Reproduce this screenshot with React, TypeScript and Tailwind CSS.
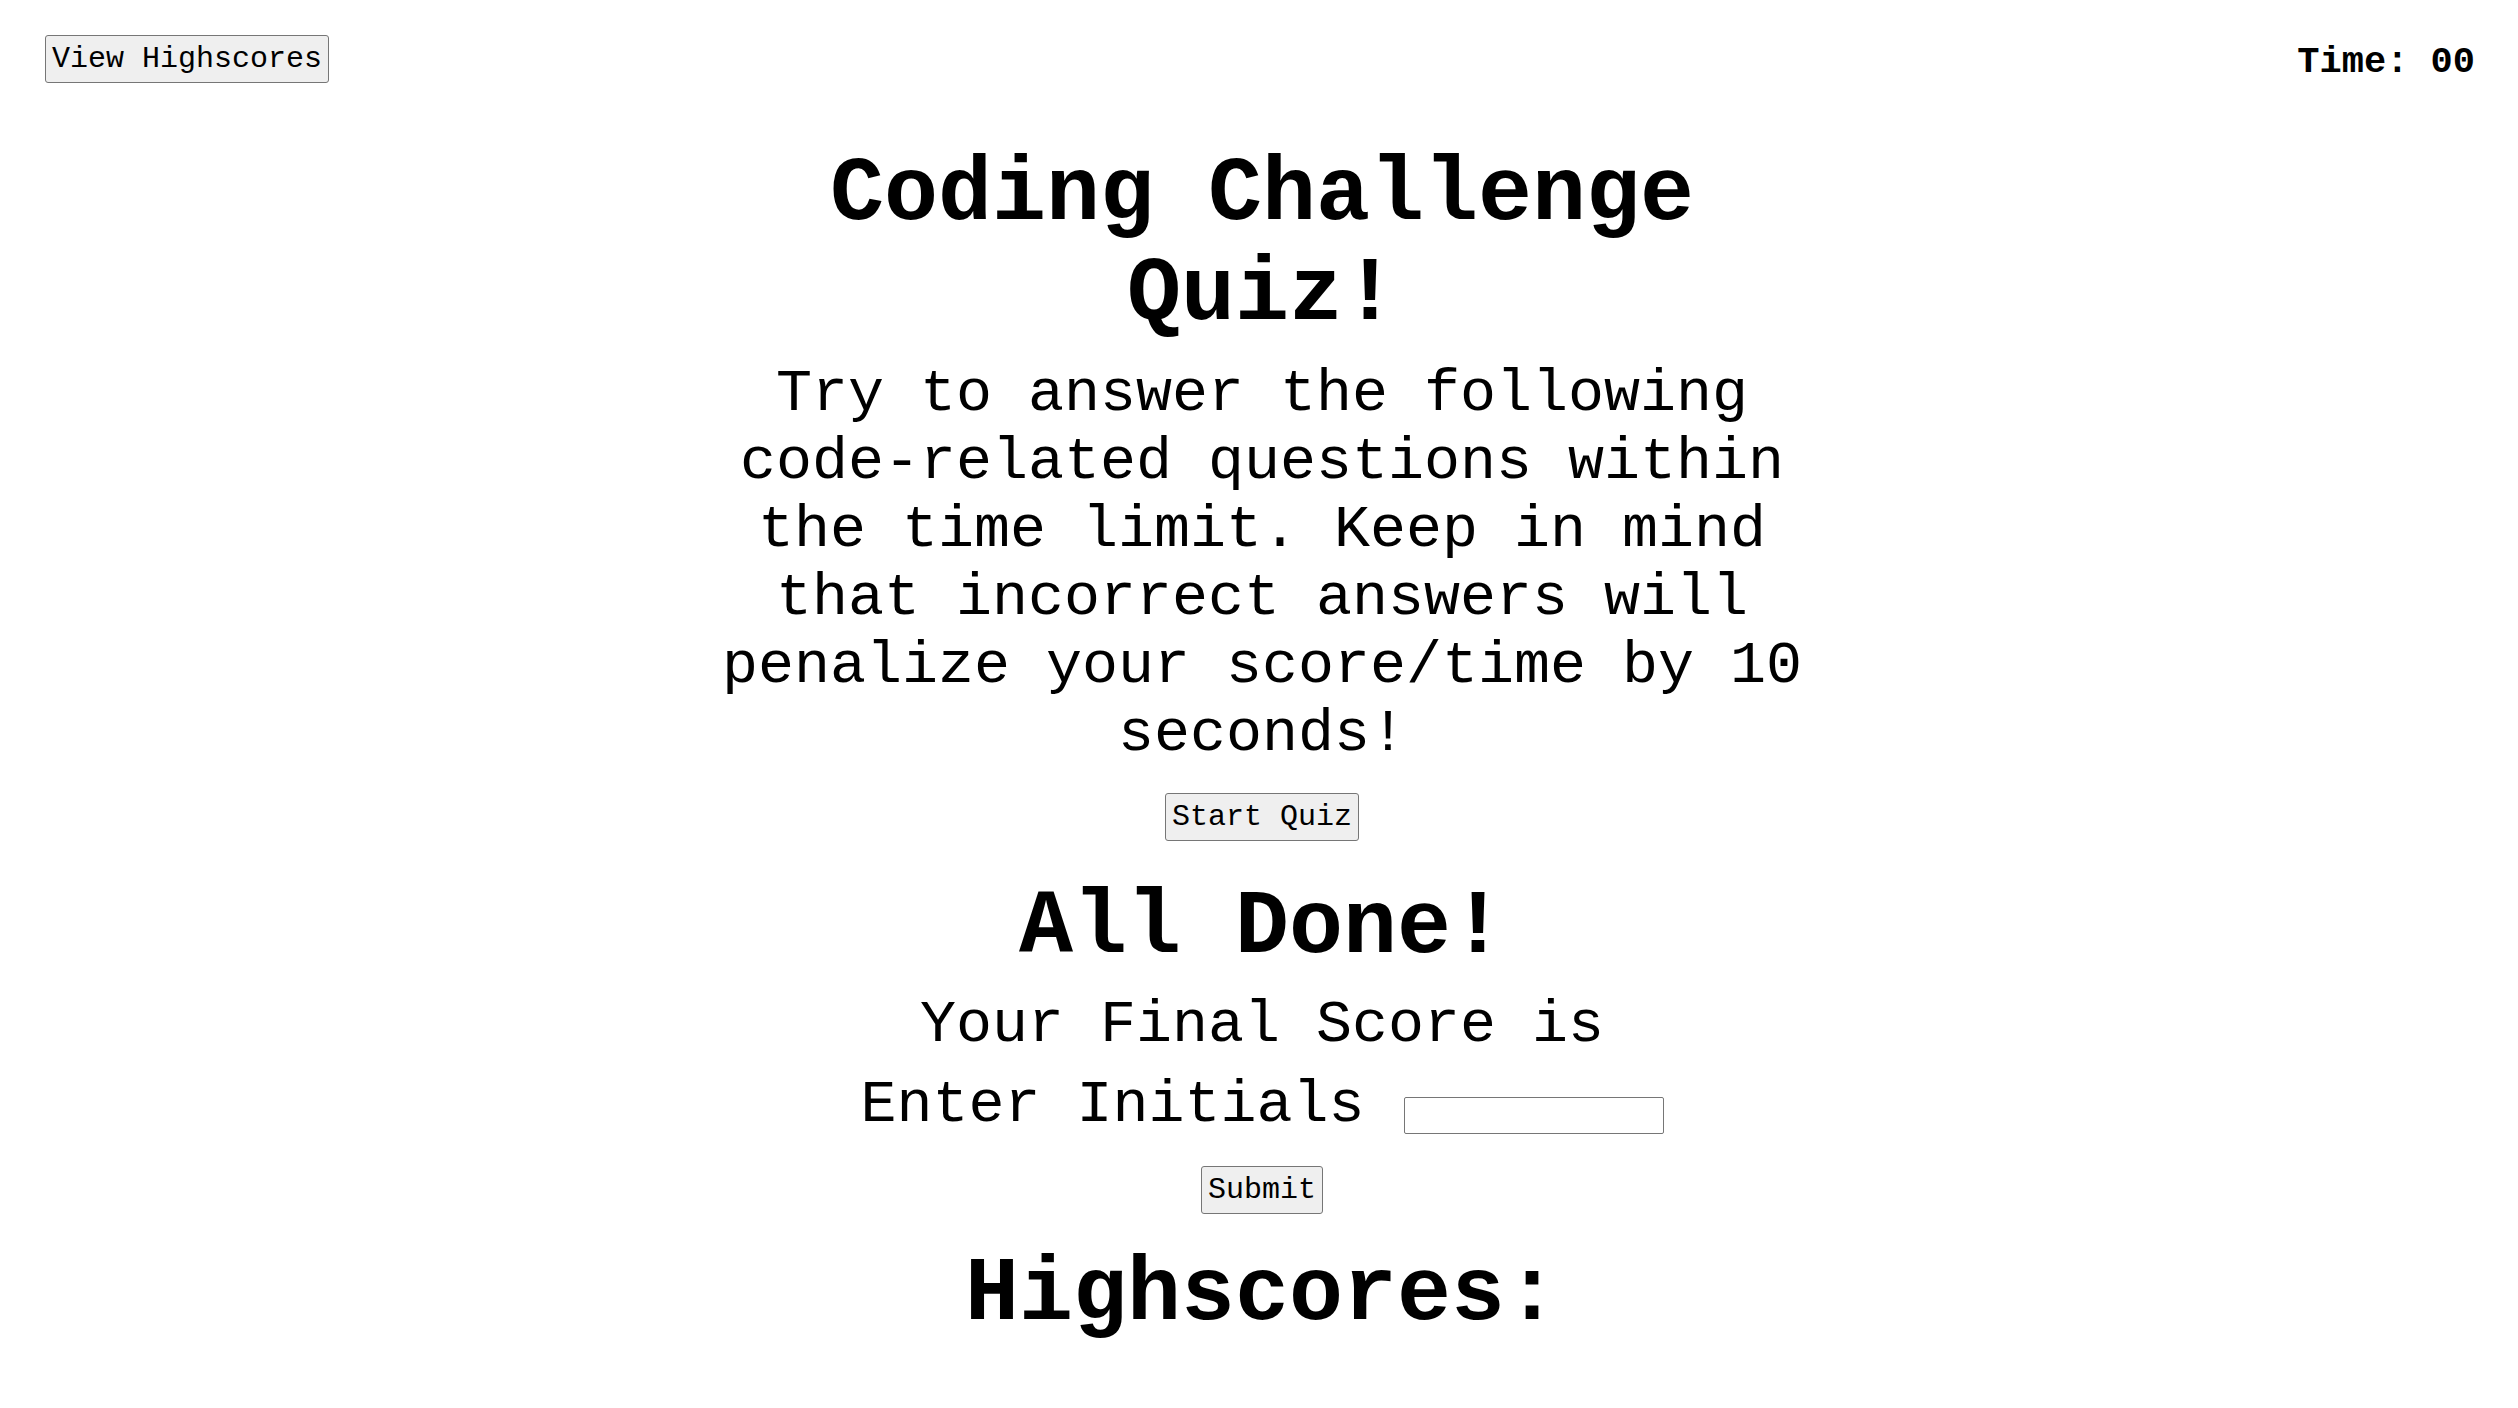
export default function App() {
  const mono = "font-['Liberation_Mono','Courier_New',monospace]";
  const btn =
    "rounded-[3px] border border-[#767676] bg-[#efefef] px-[6px] py-[6px] text-[30px] leading-[34px] text-black " +
    mono;

  return (
    <div className={`min-h-screen bg-white text-black ${mono}`}>
      <header className="flex items-start justify-between pl-[45px] pr-[43px] pt-[35px]">
        <button type="button" className={btn}>
          View Highscores
        </button>
        <div className="mt-[6px] text-[37px] font-bold leading-[42px]">Time: 00</div>
      </header>

      {/* quiz column, nudged a few px right like the original */}
      <main className="mx-auto flex w-[1146px] flex-col items-center pl-[6px] text-center">
        <h1 className="mt-[62px] text-[90px] font-bold leading-[100px]">Coding Challenge Quiz!</h1>
        <p className="mt-[15px] text-[60px] leading-[68px]">
          Try to answer the following code-related questions within the time limit. Keep in mind that incorrect
          answers will penalize your score/time by 10 seconds!
        </p>
        <button type="button" className={`mt-[25px] ${btn}`}>
          Start Quiz
        </button>

        <h2 className="mt-[37px] text-[90px] font-bold leading-[100px]">All Done!</h2>
        <p className="mt-[13px] text-[60px] leading-[68px]">Your Final Score is</p>
        <div className="mt-[12px] flex items-end">
          <span className="text-[60px] leading-[68px]">Enter Initials</span>
          <input
            type="text"
            className="mb-[5px] ml-[39px] h-[37px] w-[260px] rounded-[2px] border border-[#767676] bg-white px-1 text-[20px] outline-none"
          />
        </div>
        <button type="button" className={`mt-[27px] ${btn}`}>
          Submit
        </button>

        <h2 className="mt-[31px] text-[90px] font-bold leading-[100px]">Highscores:</h2>
      </main>
    </div>
  );
}
